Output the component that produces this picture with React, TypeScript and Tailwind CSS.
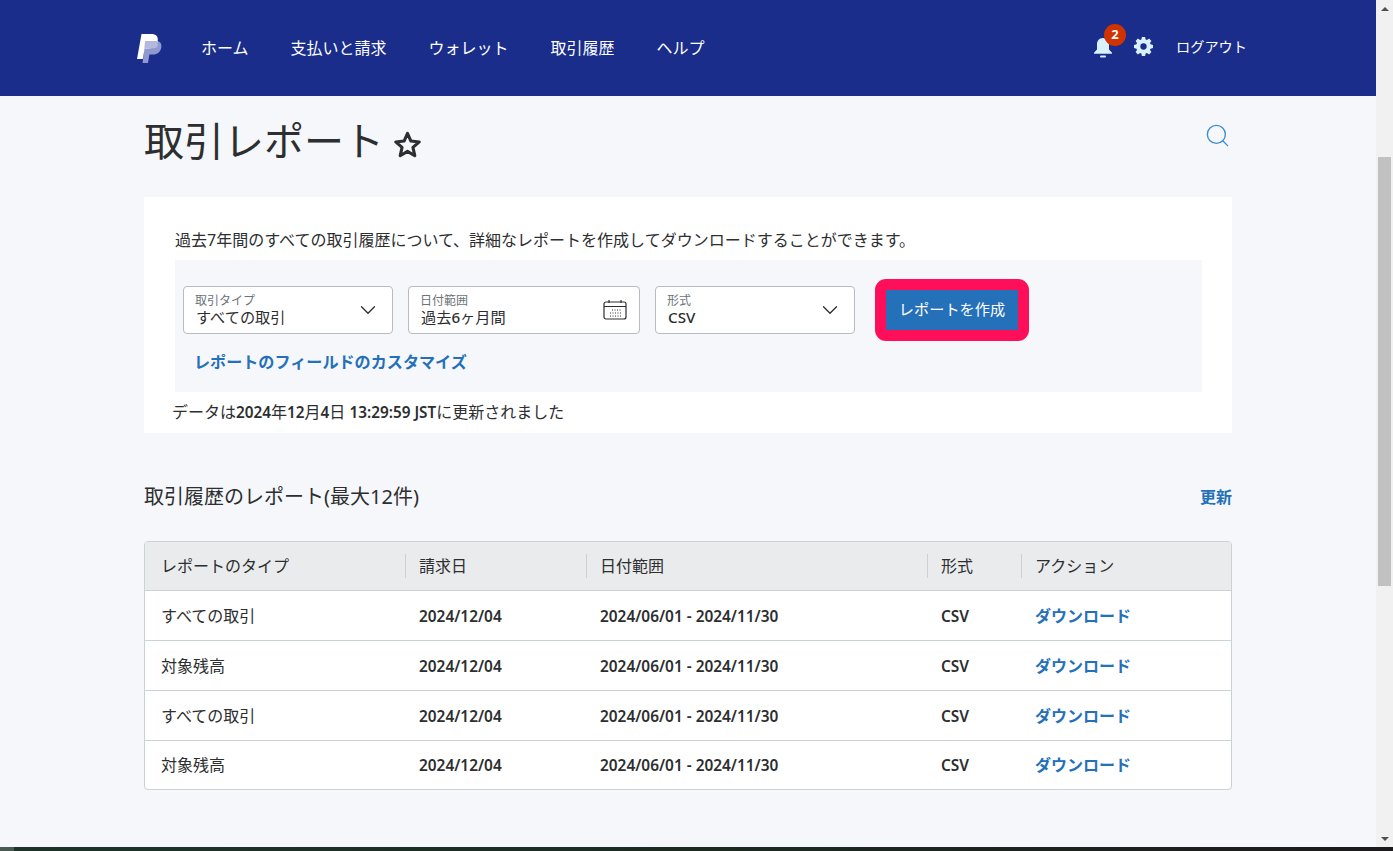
import { ChevronDown, Search } from "lucide-react";

const NAV = ["ホーム", "支払いと請求", "ウォレット", "取引履歴", "ヘルプ"];

const ROWS = [
  { type: "すべての取引", date: "2024/12/04" },
  { type: "対象残高", date: "2024/12/04" },
  { type: "すべての取引", date: "2024/12/04" },
  { type: "対象残高", date: "2024/12/04" },
];

const COLS = "grid grid-cols-[260px_181px_341px_94px_1fr] items-center";
const FONT = { fontFamily: '"Noto Sans", "Noto Sans CJK JP", sans-serif' };

function Logo() {
  return (
    <svg width="25" height="29" viewBox="0 0 25 29" className="shrink-0">
      <path d="M8 7h11c4 0 6 2.600 5.300 6.400-.8 4.400-4 7-8.300 7h-3.600L11 29H5.600z" fill="#8f98cf" />
      <path d="M4.500 0h9.800c4.600 0 7.200 2.400 6.400 6.800-.9 5-4.600 7.700-9.300 7.700H7.600L5.800 25H0z" fill="#fff" />
      <path d="M8 7h11.800c.9 1.500 1.100 3.200.8 5-.4 1-1 1.500-2 1.800-1.200.5-3 .7-7.400.7H7.600L7 18z" fill="#b3b9de" />
    </svg>
  );
}

function Bell() {
  return (
    <svg width="18" height="20" viewBox="0 0 18 20">
      <path d="M9 0c3.600 0 6 2.800 6 6.300v5.200l3 3.300v1H0v-1l3-3.300V6.300C3 2.800 5.400 0 9 0z" fill="#d9f0ff" />
      <rect x="6" y="17.500" width="6" height="2" rx="1" fill="#d9f0ff" />
    </svg>
  );
}

function Gear() {
  return (
    <svg width="19" height="19" viewBox="0 0 24 24">
      <path
        fillRule="evenodd"
        d="M10 0h4l.7 3.100 1.700.7L19.100 2 22 4.900l-1.800 2.700.7 1.700L24 10v4l-3.100.7-.7 1.700 1.800 2.700-2.900 2.900-2.700-1.800-1.700.7L14 24h-4l-.7-3.100-1.700-.7L4.900 22 2 19.100l1.800-2.700-.7-1.700L0 14v-4l3.100-.7.700-1.700L2 4.900 4.900 2l2.700 1.800 1.700-.7zM12 8a4 4 0 1 0 0 8 4 4 0 0 0 0-8z"
        fill="#d9f0ff"
      />
    </svg>
  );
}

function Star() {
  return (
    <svg width="33" height="33" viewBox="0 0 28 28">
      <path
        d="M14 4.500l2.900 6.600 7.100.7-5.400 4.700 1.600 7-6.200-3.700-6.200 3.700 1.600-7L4 11.800l7.100-.7z"
        fill="none"
        stroke="#2c2e2f"
        strokeWidth="2.600"
        strokeLinejoin="round"
      />
    </svg>
  );
}

function CalendarIcon() {
  return (
    <svg width="24" height="22" viewBox="0 0 24 22" fill="none" stroke="#2c2e2f" strokeWidth="1.200">
      <rect x="1" y="3" width="22" height="17" rx="2" />
      <path d="M1 7.500h22M6 1v3M18 1v3" />
      <path d="M9 11h9M7 14h11M7 17h11" strokeDasharray="1 1.500" strokeWidth="1" />
    </svg>
  );
}

function Field({ label, value, width, icon }: { label: string; value: React.ReactNode; width: string; icon: React.ReactNode }) {
  return (
    <div className={`${width} h-[48px] bg-white border border-[#b7bcc0] rounded-[4px] pl-[11px] pr-[12px] flex items-center justify-between`}>
      <div className="flex flex-col">
        <span className="text-[12px] leading-[13px] text-[#6c7378] mt-[1px]">{label}</span>
        <span className="text-[15.200px] leading-[20px] text-[#2c2e2f] pl-[1px]">{value}</span>
      </div>
      {icon}
    </div>
  );
}

export default function App() {
  return (
    <div className="h-[851px] w-[1393px] overflow-hidden flex flex-col bg-[#f5f7fa]" style={FONT}>
      <div className="flex flex-1 min-h-0">
        <div className="flex-1 flex flex-col min-w-0">
          <header className="h-[96px] bg-[#1b2d8b] flex items-center pl-[137px] pr-[129px] text-white shrink-0">
            <Logo />
            <nav className="flex gap-[42px] ml-[39px] text-[16px]">
              {NAV.map((item) => (
                <span key={item}>{item}</span>
              ))}
            </nav>
            <div className="ml-auto flex items-center -mt-[3px]">
              <div className="relative flex mt-[2px]">
                <Bell />
                <span className="absolute -top-[14px] left-[10px] w-[22px] h-[22px] rounded-full bg-[#d03200] text-white text-[13px] font-bold flex items-center justify-center">
                  2
                </span>
              </div>
              <div className="ml-[22px] flex">
                <Gear />
              </div>
              <span className="ml-[23px] text-[14.200px]">ログアウト</span>
            </div>
          </header>

          <main className="ml-[144px] w-[1088px]">
            <div className="h-[101px] flex items-start justify-between">
              <div className="flex items-center mt-[19px]">
                <h1 className="text-[40px] leading-[52px] text-[#2c2e2f]">取引レポート</h1>
                <span className="ml-[7px] mt-[6px] flex">
                  <Star />
                </span>
              </div>
              <Search className="mt-[26px] mr-[1px] text-[#3a8dd0]" size={27} strokeWidth={1.2} />
            </div>

            <section className="bg-white h-[236px] pt-[32px] pl-[31px] pr-[30px]">
              <p className="text-[16px] leading-[22px] text-[#2c2e2f] whitespace-nowrap">
                過去7年間のすべての取引履歴について、詳細なレポートを作成してダウンロードすることができます。
              </p>
              <div className="bg-[#f5f7fa] h-[132px] mt-[9px] pl-[8px]">
                <div className="flex items-start pt-[19px]">
                  <div className="flex items-center gap-[15px] mt-[7px]">
                    <Field label="取引タイプ" value="すべての取引" width="w-[210px]" icon={<ChevronDown size={26} strokeWidth={1.2} className="text-[#2c2e2f] mr-[-1px]" />} />
                    <Field label="日付範囲" value={<>過去<span className="font-medium">6</span>ヶ月間</>} width="w-[232px]" icon={<CalendarIcon />} />
                    <Field label="形式" value={<span className="font-medium">CSV</span>} width="w-[200px]" icon={<ChevronDown size={26} strokeWidth={1.2} className="text-[#2c2e2f] mr-[-1px]" />} />
                  </div>
                  <button className="ml-[20px] w-[154px] h-[62px] rounded-[11px] border-[11px] border-[#ff0f5a] bg-[#2470b9] text-white text-[15.200px] pb-[2px] flex items-center justify-center whitespace-nowrap">
                    レポートを作成
                  </button>
                </div>
                <a className="block ml-[11px] mt-[9px] text-[16.100px] leading-[24px] font-bold text-[#2470b9]">
                  レポートのフィールドのカスタマイズ
                </a>
              </div>
              <p className="-ml-[3px] mt-[9px] text-[16px] leading-[22px] text-[#2c2e2f] whitespace-nowrap">
                データは<span className="font-semibold text-[15.300px]">2024</span>年<span className="font-semibold text-[15.300px]">12</span>月<span className="font-semibold text-[15.300px]">4</span>日 <span className="font-semibold text-[15.300px]">13:29:59 JST</span>に更新されました
              </p>
            </section>

            <div className="h-[108px] flex items-start justify-between pt-[50px]">
              <h2 className="text-[20px] leading-[28px] text-[#2c2e2f]">取引履歴のレポート(最大12件)</h2>
              <a className="text-[16px] leading-[28px] font-bold text-[#2470b9]">更新</a>
            </div>

            <div className="border border-[#cbd2d6] rounded-[4px] bg-white overflow-hidden">
              <div className={`${COLS} h-[49px] bg-[#eaebed] border-b border-[#cbd2d6] text-[16px] text-[#2c2e2f]`}>
                <div className="pl-[16px]">レポートのタイプ</div>
                <div className="pl-[13px] border-l border-[#cbd2d6] leading-[24px]">請求日</div>
                <div className="pl-[13px] border-l border-[#cbd2d6] leading-[24px]">日付範囲</div>
                <div className="pl-[13px] border-l border-[#cbd2d6] leading-[24px]">形式</div>
                <div className="pl-[13px] border-l border-[#cbd2d6] leading-[24px]">アクション</div>
              </div>
              {ROWS.map((row, i) => (
                <div key={i} className={`${COLS} ${i < 3 ? "h-[50px] border-b border-[#cbd2d6] pt-[1px]" : "h-[48px]"} text-[16px] text-[#2c2e2f]`}>
                  <div className="pl-[16px]">{row.type}</div>
                  <div className="pl-[14px] pt-[2px] font-semibold text-[15.400px]">{row.date}</div>
                  <div className="pl-[14px] pt-[2px] font-semibold text-[15.400px]">2024/06/01 - 2024/11/30</div>
                  <div className="pl-[14px] pt-[2px] font-semibold text-[15.400px]">CSV</div>
                  <a className="pl-[14px] font-bold text-[16px] text-[#2470b9]">ダウンロード</a>
                </div>
              ))}
            </div>
          </main>
        </div>

        <div className="w-[17px] shrink-0 bg-[#f1f1f1] flex flex-col items-center">
          <div className="h-[17px] flex items-center justify-center">
            <span className="w-0 h-0 border-x-[4px] border-x-transparent border-b-[4px] border-b-[#505050]" />
          </div>
          <div className="w-[13px] h-[429px] mt-[140px] bg-[#c1c1c1]" />
          <div className="mt-auto h-[17px] flex items-center justify-center">
            <span className="w-0 h-0 border-x-[4px] border-x-transparent border-t-[4px] border-t-[#505050]" />
          </div>
        </div>
      </div>
      <div className="h-[4px] shrink-0 flex">
        <div className="w-[14px] bg-[#4a5a52]" />
        <div className="flex-1 bg-linear-to-r from-[#1e3229] via-[#1c2a22] to-[#1c1a1c]" />
      </div>
    </div>
  );
}
